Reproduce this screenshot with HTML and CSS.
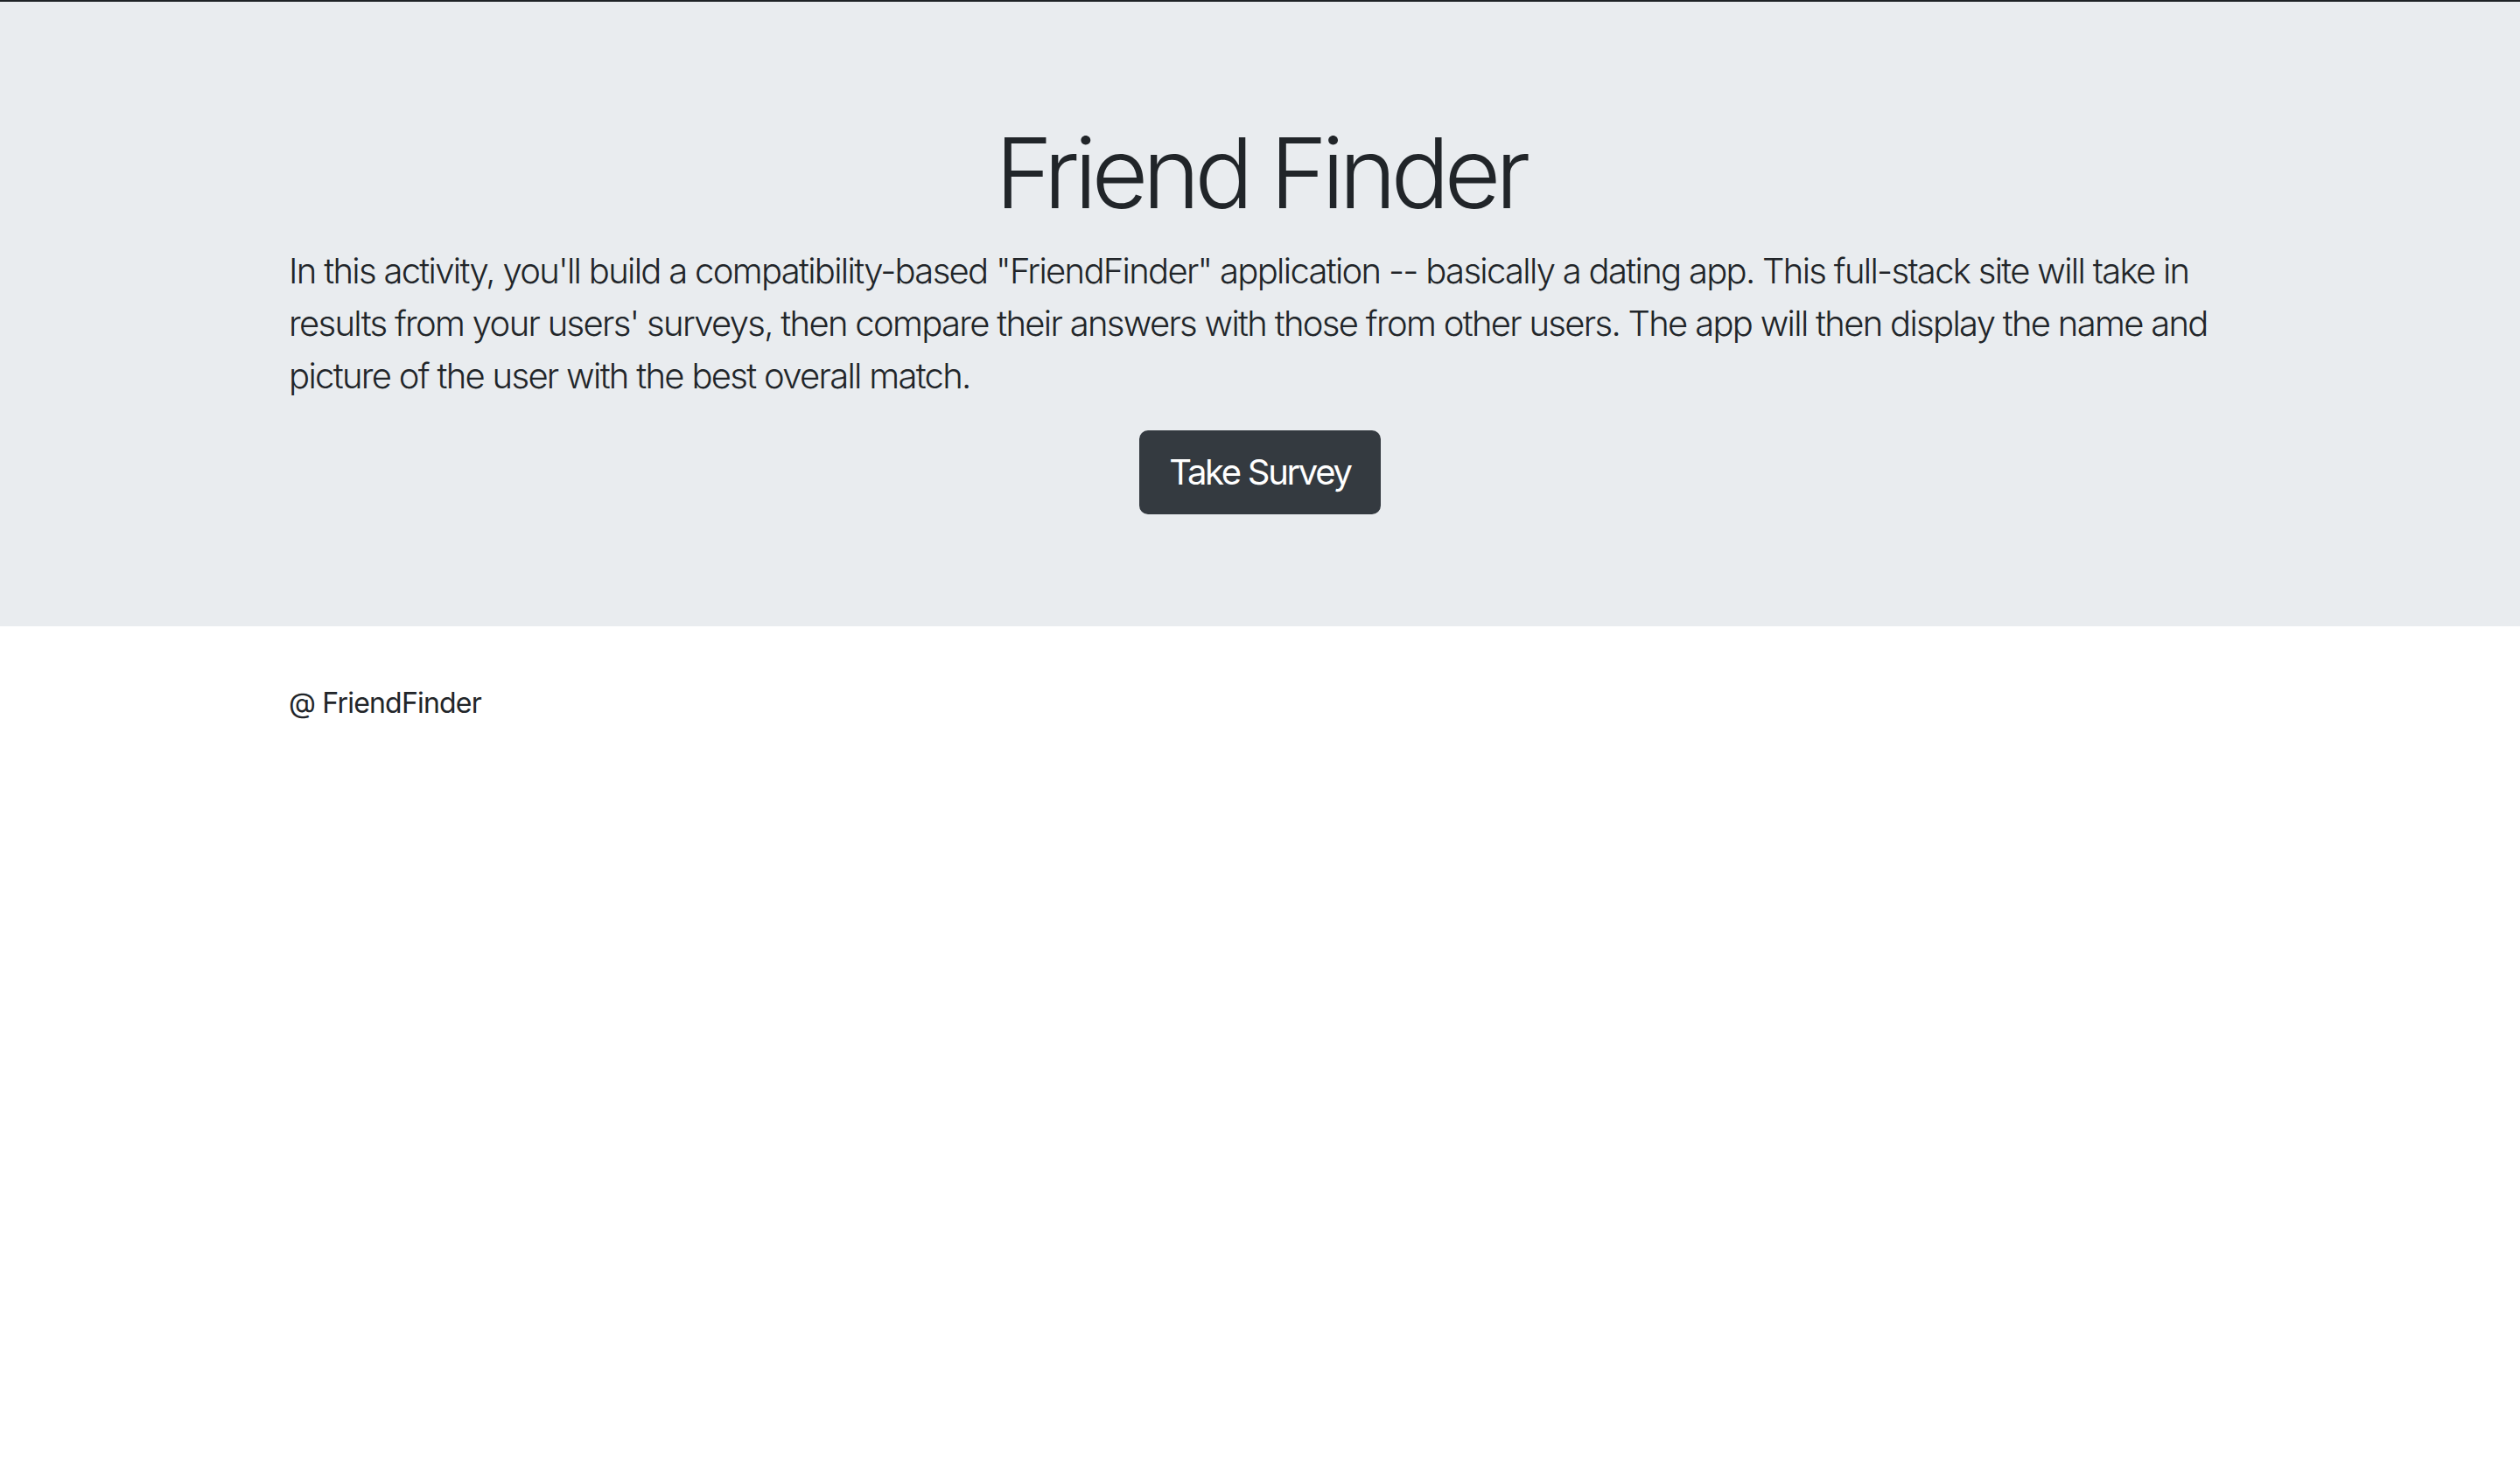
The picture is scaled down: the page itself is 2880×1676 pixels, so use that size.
FILE: index.html
```html
<!DOCTYPE html>
<html lang="en">
<head>
<meta charset="utf-8">
<title>Friend Finder</title>
<link rel="stylesheet" href="styles.css">
</head>
<body>
<div class="topline"></div>
<header class="jumbotron">
  <div class="container">
    <h1 class="display">Friend Finder</h1>
    <p class="lead">In this activity, you'll build a compatibility-based "FriendFinder" application -- basically a dating app. This full-stack site will take in results from your users' surveys, then compare their answers with those from other users. The app will then display the name and picture of the user with the best overall match.</p>
    <div class="actions"><a class="btn" href="#">Take Survey</a></div>
  </div>
</header>
<footer class="container footer">@ FriendFinder</footer>
</body>
</html>
```
FILE: styles.css
```css
html, body {
  margin: 0;
  padding: 0;
}
body {
  font-family: Inter, "Noto Sans", "Liberation Sans", sans-serif;
  color: #212529;
  background: #fff;
  font-size: 32px;
  line-height: 1.5;
}
.topline {
  height: 2px;
  background: #1f2326;
}
.container {
  width: 2280px;
  margin: 0 auto;
  padding: 0 30px;
  box-sizing: border-box;
}
.jumbotron {
  background: #e9ecef;
  padding: 128px 0 128px;
  margin-bottom: 64px;
}
.display {
  margin: 0 0 16px;
  font-size: 112px;
  font-weight: 300;
  line-height: 1.2;
  text-align: center;
  letter-spacing: -6.5px;
}
.lead {
  margin: 0 0 32px;
  font-size: 40px;
  font-weight: 300;
  line-height: 1.5;
  letter-spacing: -1.7px;
}
.actions {
  text-align: center;
}
.btn {
  display: inline-block;
  font-size: 40px;
  line-height: 1.5;
  padding: 16px 32px;
  border: 2px solid #343a40;
  background: #343a40;
  color: #fff;
  border-radius: 10px;
  text-decoration: none;
  letter-spacing: -2.3px;
}
.footer {
  line-height: 48px;
  letter-spacing: -0.8px;
}
```
